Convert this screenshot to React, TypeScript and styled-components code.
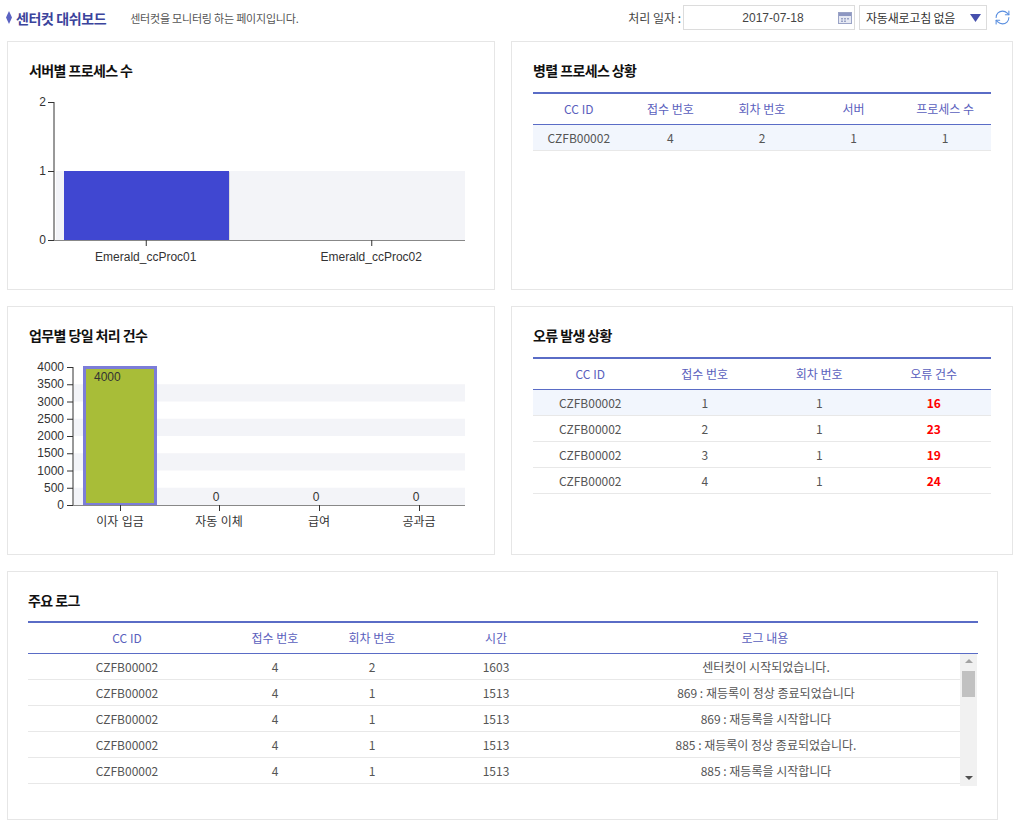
import React from "react";
import styled, { createGlobalStyle } from "styled-components";
import { RefreshCw } from "lucide-react";

const GlobalStyle = createGlobalStyle`
  html, body {
    margin: 0;
    padding: 0;
    background: #fff;
  }
  body {
    font-family: "Noto Sans CJK KR", "Noto Sans", sans-serif;
    color: #333;
  }
  * { box-sizing: border-box; }
`;

const Page = styled.div`
  width: 1023px;
  padding: 0 0 8px 7px;
`;

// top bar
const TopBar = styled.header`
  height: 35px;
  display: flex;
  align-items: center;
  justify-content: space-between;
  padding: 0 12px 0 0;
  margin-left: -1px;
  margin-bottom: 6px;
`;

const Brand = styled.div`
  display: flex;
  align-items: center;
`;

const BrandTitle = styled.h1`
  margin: 0 0 0 4px;
  font-size: 14px;
  font-weight: 700;
  color: #3b449c;
  letter-spacing: -0.4px;
`;

const BrandDesc = styled.span`
  margin-left: 24px;
  font-size: 11px;
  color: #555;
  letter-spacing: -0.2px;
`;

const Controls = styled.div`
  display: flex;
  align-items: center;
`;

const FieldLabel = styled.span`
  font-size: 12px;
  color: #444;
  margin-right: 2px;
`;

const DateBox = styled.div`
  width: 172px;
  height: 25px;
  border: 1px solid #dcdcdc;
  display: flex;
  align-items: center;
  padding: 0 2px 0 24px;
`;

const DateText = styled.span`
  flex: 1;
  text-align: center;
  font-size: 12px;
  color: #444;
  font-family: "Liberation Sans", "Noto Sans CJK KR", sans-serif;
`;

const SelectBox = styled.div`
  width: 128px;
  height: 25px;
  margin-left: 4px;
  border: 1px solid #dcdcdc;
  display: flex;
  align-items: center;
  justify-content: space-between;
  padding: 0 5px 0 6px;
`;

const SelectText = styled.span`
  font-size: 12px;
  color: #333;
  letter-spacing: -0.2px;
`;

const RefreshButton = styled.button`
  margin-left: 7px;
  border: 0;
  padding: 0;
  background: none;
  display: flex;
  color: #5a8fe0;
  cursor: pointer;
`;

// cards
const Grid = styled.main`
  display: grid;
  grid-template-columns: 488px 502px;
  grid-auto-rows: 249px;
  gap: 16px;
`;

const Card = styled.section<{ $wide?: boolean }>`
  border: 1px solid #e6e6e6;
  background: #fff;
  padding: ${(p) => (p.$wide ? "18px 19px 18px 20px" : "18px 21px")};
  ${(p) => (p.$wide ? "grid-column: 1 / -1; width: 991px;" : "")}
`;

const CardTitle = styled.h2`
  margin: 0;
  height: 20px;
  line-height: 20px;
  font-size: 14px;
  font-weight: 700;
  color: #111;
  letter-spacing: -0.6px;
`;

const ChartSvg = styled.svg`
  display: block;
  margin-top: 10px;
  font-family: "Liberation Sans", "Noto Sans CJK KR", sans-serif;
  font-size: 12px;
`;

// tables
const DataTable = styled.table`
  width: 100%;
  margin-top: 12px;
  border-collapse: collapse;
  table-layout: fixed;
  border-top: 2px solid #5a6cc6;
`;

const HeadTable = styled(DataTable)`
  margin-top: 11px;
`;

const HeadCell = styled.th<{ $gutter?: boolean }>`
  height: 31px;
  padding: 0 ${(p) => (p.$gutter ? "20px" : "0")} 0 0;
  font-size: 12px;
  font-weight: 400;
  color: #5a60bd;
  border-bottom: 1px solid #5a6cc6;
`;

const BodyRow = styled.tr<{ $active?: boolean }>`
  background: ${(p) => (p.$active ? "#f2f6fd" : "#fff")};
`;

const Cell = styled.td<{ $error?: boolean }>`
  height: 26px;
  padding: 0;
  text-align: center;
  font-size: 12px;
  color: ${(p) => (p.$error ? "#f00" : "#555")};
  font-weight: ${(p) => (p.$error ? 700 : 400)};
  border-bottom: 1px solid #e8e8e8;
  white-space: nowrap;
`;

const PlainTable = styled.table`
  width: 100%;
  border-collapse: collapse;
  table-layout: fixed;
`;

// log body: scrolling rows with a drawn scrollbar beside them
const LogBody = styled.div`
  display: flex;
  height: 132px;
  margin-right: 1px;
`;

const LogScroll = styled.div`
  flex: 1;
  overflow-y: auto;
  scrollbar-width: none;
  &::-webkit-scrollbar { display: none; }
`;

const ScrollTrack = styled.div`
  width: 17px;
  flex: none;
  background: #f1f1f1;
  display: flex;
  flex-direction: column;
`;

const ScrollArrow = styled.div`
  height: 15px;
  display: flex;
  align-items: center;
  justify-content: center;
  flex: none;
`;

const ThumbLane = styled.div`
  flex: 1;
  padding-top: 2px;
`;

const ScrollThumb = styled.div`
  width: 13px;
  height: 26px;
  margin: 0 auto;
  background: #c1c1c1;
`;

const Diamond = () => (
  <svg width="6" height="13" viewBox="0 0 6 13">
    <path d="M3 0 L6 6.5 L3 13 L0 6.5 Z" fill="#5b63c2" />
  </svg>
);

const CalendarIcon = () => (
  <svg width="14" height="12" viewBox="0 0 14 12">
    <rect x="0.5" y="0.5" width="13" height="11" fill="#e6e9f3" stroke="#9aa3c6" />
    <rect x="1" y="1" width="12" height="3" fill="#8d97c2" />
    <rect x="3" y="6" width="2" height="1.5" fill="#9aa3c6" />
    <rect x="6" y="6" width="2" height="1.5" fill="#9aa3c6" />
    <rect x="9" y="6" width="2" height="1.5" fill="#9aa3c6" />
    <rect x="3" y="8.5" width="2" height="1.5" fill="#9aa3c6" />
    <rect x="6" y="8.5" width="2" height="1.5" fill="#9aa3c6" />
  </svg>
);

const CaretDown = () => (
  <svg width="11" height="8" viewBox="0 0 11 8">
    <path d="M0 0 H11 L5.5 8 Z" fill="#4650ad" />
  </svg>
);

const ArrowGlyph: React.FC<{ up?: boolean }> = ({ up }) => (
  <svg width="8" height="4" viewBox="0 0 8 4">
    <path d={up ? "M0 4 L4 0 L8 4 Z" : "M0 0 L8 0 L4 4 Z"} fill={up ? "#a3a3a3" : "#505050"} />
  </svg>
);

const ServerChart: React.FC = () => {
  const axisX = 25;
  const top = 12;
  const base = 150;
  const right = 436;
  const mid = (top + base) / 2;
  const servers = [
    { name: "Emerald_ccProc01", value: 1 },
    { name: "Emerald_ccProc02", value: 0 },
  ];
  const band = (right - axisX) / servers.length;
  return (
    <ChartSvg width="446" height="180">
      <rect x={axisX + 2} y={mid} width={right - axisX - 2} height={base - mid} fill="#f3f4f8" />
      {servers.map((s, i) => {
        const h = (s.value / 2) * (base - top);
        return h > 0 ? (
          <g key={s.name}>
            <rect x={axisX + i * band + 10} y={base - h + 1} width={166} height={h} fill="#dcdcdc" />
            <rect x={axisX + i * band + 10} y={base - h} width={165} height={h} fill="#4047d1" />
          </g>
        ) : null;
      })}
      <line x1={axisX} y1={top} x2={axisX} y2={base} stroke="#333" />
      <line x1={axisX} y1={base + 0.5} x2={right} y2={base + 0.5} stroke="#888" />
      {[2, 1, 0].map((v, i) => {
        const y = top + i * (base - top) / 2;
        return (
          <g key={v}>
            <line x1={axisX - 6} y1={y + 0.5} x2={axisX} y2={y + 0.5} stroke="#333" />
            <text x={axisX - 8} y={y + 4} textAnchor="end" fill="#333">{v}</text>
          </g>
        );
      })}
      {servers.map((s, i) => {
        const cx = axisX + band * i + band / 2 - 11 + i * 20;
        return (
          <g key={s.name}>
            <line x1={cx + 0.5} y1={base} x2={cx + 0.5} y2={base + 6} stroke="#333" />
            <text x={cx} y={171} textAnchor="middle" fill="#333">{s.name}</text>
          </g>
        );
      })}
    </ChartSvg>
  );
};

const JobChart: React.FC = () => {
  const axisX = 44;
  const top = 12;
  const base = 150;
  const right = 436;
  const step = (base - top) / 8;
  const jobs = [
    { name: "이자 입금", value: 4000, cx: 91 },
    { name: "자동 이체", value: 0, cx: 190 },
    { name: "급여", value: 0, cx: 290 },
    { name: "공과금", value: 0, cx: 390 },
  ];
  const ticks = [4000, 3500, 3000, 2500, 2000, 1500, 1000, 500, 0];
  return (
    <ChartSvg width="446" height="180">
      {[1, 3, 5, 7].map((i) => (
        <rect key={i} x={axisX + 1} y={top + i * step} width={right - axisX - 1} height={step} fill="#f3f4f8" />
      ))}
      <rect x={55.5} y={top + 0.5} width={71} height={base - top - 1} fill="#a8bd38" stroke="#7c7dd8" strokeWidth={3} />
      <text x={65} y={26} fill="#333">4000</text>
      <line x1={axisX} y1={top} x2={axisX} y2={base} stroke="#333" />
      <line x1={axisX} y1={base + 0.5} x2={right} y2={base + 0.5} stroke="#888" />
      {ticks.map((v, i) => {
        const y = top + i * step;
        return (
          <g key={v}>
            <line x1={axisX - 6} y1={y + 0.5} x2={axisX} y2={y + 0.5} stroke="#333" />
            <text x={axisX - 9} y={y + 4} textAnchor="end" fill="#333">{v}</text>
          </g>
        );
      })}
      {jobs.map((j) => (
        <g key={j.name}>
          <line x1={j.cx + 0.5} y1={base} x2={j.cx + 0.5} y2={base + 6} stroke="#333" />
          <text x={j.cx} y={171} textAnchor="middle" fill="#333">{j.name}</text>
          {j.value === 0 && (
            <text x={j.cx - 3} y={146} textAnchor="middle" fill="#333">0</text>
          )}
        </g>
      ))}
    </ChartSvg>
  );
};

const parallel = [{ id: "CZFB00002", receipt: 4, round: 2, server: 1, procs: 1 }];

const errors = [
  { id: "CZFB00002", receipt: 1, round: 1, count: 16 },
  { id: "CZFB00002", receipt: 2, round: 1, count: 23 },
  { id: "CZFB00002", receipt: 3, round: 1, count: 19 },
  { id: "CZFB00002", receipt: 4, round: 1, count: 24 },
];

const logs = [
  { id: "CZFB00002", receipt: 4, round: 2, time: "1603", msg: "센터컷이 시작되었습니다." },
  { id: "CZFB00002", receipt: 4, round: 1, time: "1513", msg: "869 : 재등록이 정상 종료되었습니다" },
  { id: "CZFB00002", receipt: 4, round: 1, time: "1513", msg: "869 : 재등록을 시작합니다" },
  { id: "CZFB00002", receipt: 4, round: 1, time: "1513", msg: "885 : 재등록이 정상 종료되었습니다." },
  { id: "CZFB00002", receipt: 4, round: 1, time: "1513", msg: "885 : 재등록을 시작합니다" },
  { id: "CZFB00002", receipt: 4, round: 1, time: "1512", msg: "901 : 재등록이 정상 종료되었습니다." },
  { id: "CZFB00002", receipt: 4, round: 1, time: "1512", msg: "901 : 재등록을 시작합니다" },
  { id: "CZFB00002", receipt: 4, round: 1, time: "1511", msg: "센터컷이 정상 종료되었습니다." },
  { id: "CZFB00002", receipt: 3, round: 1, time: "1450", msg: "센터컷이 시작되었습니다." },
  { id: "CZFB00002", receipt: 3, round: 1, time: "1448", msg: "752 : 재등록이 정상 종료되었습니다." },
  { id: "CZFB00002", receipt: 3, round: 1, time: "1448", msg: "752 : 재등록을 시작합니다" },
  { id: "CZFB00002", receipt: 3, round: 1, time: "1447", msg: "센터컷이 정상 종료되었습니다." },
  { id: "CZFB00002", receipt: 2, round: 1, time: "1320", msg: "센터컷이 시작되었습니다." },
  { id: "CZFB00002", receipt: 2, round: 1, time: "1318", msg: "614 : 재등록이 정상 종료되었습니다." },
  { id: "CZFB00002", receipt: 2, round: 1, time: "1318", msg: "614 : 재등록을 시작합니다" },
  { id: "CZFB00002", receipt: 2, round: 1, time: "1317", msg: "센터컷이 정상 종료되었습니다." },
  { id: "CZFB00002", receipt: 1, round: 1, time: "1102", msg: "센터컷이 시작되었습니다." },
  { id: "CZFB00002", receipt: 1, round: 1, time: "1100", msg: "센터컷이 정상 종료되었습니다." },
  { id: "CZFB00002", receipt: 1, round: 1, time: "1058", msg: "센터컷이 시작되었습니다." },
  { id: "CZFB00002", receipt: 1, round: 1, time: "1055", msg: "센터컷이 정상 종료되었습니다." },
];

const LogCols = () => (
  <colgroup>
    <col style={{ width: 198 }} />
    <col style={{ width: 98 }} />
    <col style={{ width: 96 }} />
    <col style={{ width: 152 }} />
    <col />
  </colgroup>
);

const App: React.FC = () => (
  <Page>
    <GlobalStyle />
    <TopBar>
      <Brand>
        <Diamond />
        <BrandTitle>센터컷 대쉬보드</BrandTitle>
        <BrandDesc>센터컷을 모니터링 하는 페이지입니다.</BrandDesc>
      </Brand>
      <Controls>
        <FieldLabel>처리 일자 :</FieldLabel>
        <DateBox>
          <DateText>2017-07-18</DateText>
          <CalendarIcon />
        </DateBox>
        <SelectBox>
          <SelectText>자동새로고침 없음</SelectText>
          <CaretDown />
        </SelectBox>
        <RefreshButton aria-label="새로고침">
          <RefreshCw size={17} strokeWidth={1.5} />
        </RefreshButton>
      </Controls>
    </TopBar>

    <Grid>
      <Card>
        <CardTitle>서버별 프로세스 수</CardTitle>
        <ServerChart />
      </Card>

      <Card>
        <CardTitle>병렬 프로세스 상황</CardTitle>
        <DataTable>
          <thead>
            <tr>
              <HeadCell>CC ID</HeadCell>
              <HeadCell>접수 번호</HeadCell>
              <HeadCell>회차 번호</HeadCell>
              <HeadCell>서버</HeadCell>
              <HeadCell>프로세스 수</HeadCell>
            </tr>
          </thead>
          <tbody>
            {parallel.map((r, i) => (
              <BodyRow key={i} $active={i === 0}>
                <Cell>{r.id}</Cell>
                <Cell>{r.receipt}</Cell>
                <Cell>{r.round}</Cell>
                <Cell>{r.server}</Cell>
                <Cell>{r.procs}</Cell>
              </BodyRow>
            ))}
          </tbody>
        </DataTable>
      </Card>

      <Card>
        <CardTitle>업무별 당일 처리 건수</CardTitle>
        <JobChart />
      </Card>

      <Card>
        <CardTitle>오류 발생 상황</CardTitle>
        <DataTable>
          <thead>
            <tr>
              <HeadCell>CC ID</HeadCell>
              <HeadCell>접수 번호</HeadCell>
              <HeadCell>회차 번호</HeadCell>
              <HeadCell>오류 건수</HeadCell>
            </tr>
          </thead>
          <tbody>
            {errors.map((r, i) => (
              <BodyRow key={i} $active={i === 0}>
                <Cell>{r.id}</Cell>
                <Cell>{r.receipt}</Cell>
                <Cell>{r.round}</Cell>
                <Cell $error>{r.count}</Cell>
              </BodyRow>
            ))}
          </tbody>
        </DataTable>
      </Card>

      <Card $wide>
        <CardTitle>주요 로그</CardTitle>
        <HeadTable>
          <LogCols />
          <thead>
            <tr>
              <HeadCell>CC ID</HeadCell>
              <HeadCell>접수 번호</HeadCell>
              <HeadCell>회차 번호</HeadCell>
              <HeadCell>시간</HeadCell>
              <HeadCell $gutter>로그 내용</HeadCell>
            </tr>
          </thead>
        </HeadTable>
        <LogBody>
          <LogScroll>
            <PlainTable>
              <LogCols />
              <tbody>
                {logs.map((r, i) => (
                  <BodyRow key={i}>
                    <Cell>{r.id}</Cell>
                    <Cell>{r.receipt}</Cell>
                    <Cell>{r.round}</Cell>
                    <Cell>{r.time}</Cell>
                    <Cell>{r.msg}</Cell>
                  </BodyRow>
                ))}
              </tbody>
            </PlainTable>
          </LogScroll>
          <ScrollTrack aria-hidden>
            <ScrollArrow>
              <ArrowGlyph up />
            </ScrollArrow>
            <ThumbLane>
              <ScrollThumb />
            </ThumbLane>
            <ScrollArrow>
              <ArrowGlyph />
            </ScrollArrow>
          </ScrollTrack>
        </LogBody>
      </Card>
    </Grid>
  </Page>
);

export default App;
